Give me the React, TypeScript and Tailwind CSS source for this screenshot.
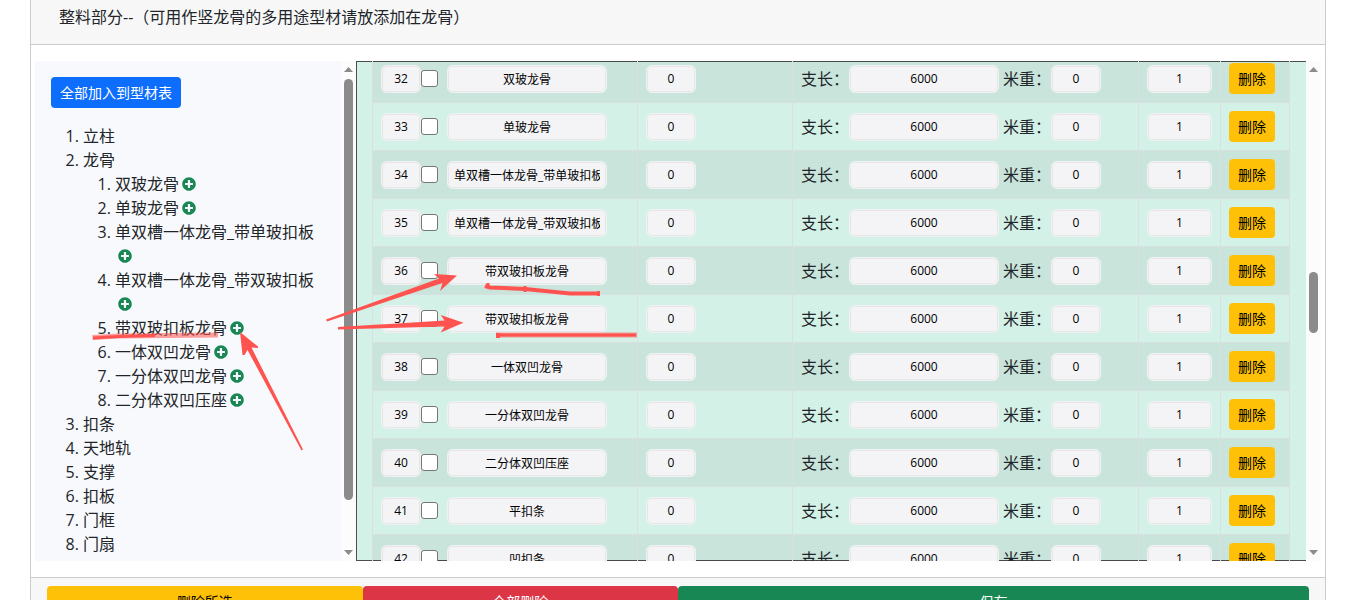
import { FaPlusCircle } from "react-icons/fa";

type Row = { no: number; name: string };

const rows: Row[] = [
  { no: 32, name: "双玻龙骨" },
  { no: 33, name: "单玻龙骨" },
  { no: 34, name: "单双槽一体龙骨_带单玻扣板" },
  { no: 35, name: "单双槽一体龙骨_带双玻扣板" },
  { no: 36, name: "带双玻扣板龙骨" },
  { no: 37, name: "带双玻扣板龙骨" },
  { no: 38, name: "一体双凹龙骨" },
  { no: 39, name: "一分体双凹龙骨" },
  { no: 40, name: "二分体双凹压座" },
  { no: 41, name: "平扣条" },
  { no: 42, name: "凹扣条" },
];

const categories: { name: string; children?: string[] }[] = [
  { name: "立柱" },
  {
    name: "龙骨",
    children: [
      "双玻龙骨",
      "单玻龙骨",
      "单双槽一体龙骨_带单玻扣板",
      "单双槽一体龙骨_带双玻扣板",
      "带双玻扣板龙骨",
      "一体双凹龙骨",
      "一分体双凹龙骨",
      "二分体双凹压座",
    ],
  },
  { name: "扣条" },
  { name: "天地轨" },
  { name: "支撑" },
  { name: "扣板" },
  { name: "门框" },
  { name: "门扇" },
];

export default function App() {
  return (
    <div className="h-screen overflow-hidden bg-white font-['Open_Sans','Noto_Sans_CJK_SC',sans-serif] text-base text-[#212529]">
      <div className="relative ml-[30px] mr-[22px] border-x border-[#ccc]">
        <header className="h-[45px] border-b border-[#ccc] bg-[#f7f7f7] px-7 pt-[5px]">
          <h1 className="leading-6">整料部分--（可用作竖龙骨的多用途型材请放添加在龙骨）</h1>
        </header>
        <main className="flex px-1 py-4">
          <CategoryPanel />
          <ProfileTable />
        </main>
        <footer className="flex border-t border-[#ccc] bg-[#f7f7f7] px-4 py-2 text-sm">
          <button className="h-[31px] flex-1 rounded bg-[#ffc107] text-black">删除所选</button>
          <button className="h-[31px] flex-1 rounded bg-[#dc3545] text-white">全部删除</button>
          <button className="h-[31px] flex-2 rounded bg-[#198754] text-white">保存</button>
        </footer>
      </div>
      <Marks />
    </div>
  );
}

function CategoryPanel() {
  return (
    <aside className="flex h-[500px] w-[321px] shrink-0 overflow-hidden bg-[#f8f9fc]">
      <div className="min-w-0 flex-1 p-4">
        <button className="block h-[31px] rounded bg-[#0d6efd] px-[9px] text-sm text-white">
          全部加入到型材表
        </button>
        <ol className="mt-4 list-decimal pl-8 leading-6">
          {categories.map((c) => (
            <li key={c.name}>
              {c.name}
              {c.children && (
                <ol className="list-decimal pl-8">
                  {c.children.map((child) => (
                    <li key={child}>
                      {child}
                      <button
                        aria-label={`添加${child}`}
                        className="ml-[3px] inline-block align-[-1px] text-sm leading-none text-[#198754]"
                      >
                        <FaPlusCircle className="block" />
                      </button>
                    </li>
                  ))}
                </ol>
              )}
            </li>
          ))}
        </ol>
      </div>
      <Scrollbar before="flex-none h-[7px]" thumb="h-[421px]" />
    </aside>
  );
}

function ProfileTable() {
  return (
    <section className="flex h-[500px] min-w-0 flex-1 overflow-hidden bg-[#d4f1e7] shadow-[inset_0_0_0_1px_#4a4f4d]">
      <div className="min-w-0 flex-1 px-4">
        <table className="-mt-[7px] w-full table-fixed border-collapse">
          <colgroup>
            <col className="w-[265px]" />
            <col className="w-[155px]" />
            <col />
            <col className="w-[82px]" />
            <col className="w-[69px]" />
          </colgroup>
          <tbody>
            {rows.map((row) => (
              <TableRow key={row.no} {...row} />
            ))}
          </tbody>
        </table>
      </div>
      <Scrollbar before="flex-none h-[200px]" thumb="h-[61px]" />
    </section>
  );
}

function TableRow({ no, name }: Row) {
  return (
    <tr className="h-12 odd:bg-black/5">
      <Cell>
        <div className="flex items-center">
          <Field label="序号" value={no} width="w-10" />
          <input
            type="checkbox"
            aria-label={`选择${no}`}
            className="mr-[9px] size-[17px] shrink-0 appearance-none rounded-[3px] border border-[#767676] bg-white"
          />
          <Field label="名称" value={name} width="w-40" />
        </div>
      </Cell>
      <Cell>
        <Field label="数量" value={0} width="w-[50px]" />
      </Cell>
      <Cell>
        <div className="flex items-center">
          <label className="flex items-center">
            <span className="w-12 shrink-0 whitespace-nowrap">支长：</span>
            <Field value={6000} width="w-[150px]" />
          </label>
          <label className="ml-1 flex items-center">
            <span className="w-12 shrink-0 whitespace-nowrap">米重：</span>
            <Field value={0} width="w-[50px]" />
          </label>
        </div>
      </Cell>
      <Cell>
        <Field label="系数" value={1} width="w-[65px]" />
      </Cell>
      <Cell>
        <button className="block h-[31px] rounded bg-[#ffc107] px-[9px] text-sm text-black">删除</button>
      </Cell>
    </tr>
  );
}

function Cell({ children }: { children: React.ReactNode }) {
  return <td className="border border-[#dadfe3] px-2 py-0">{children}</td>;
}

function Field({ label, value, width }: { label?: string; value: string | number; width: string }) {
  return (
    <input
      aria-label={label}
      defaultValue={value}
      className={`${width} block h-7 shrink-0 rounded-md border border-[#eef3f2] bg-[#f4f4f7] px-[6px] text-center text-xs text-black shadow-[inset_0_0_0_1px_#e6e6e8]`}
    />
  );
}

function Scrollbar({ before, thumb }: { before: string; thumb: string }) {
  return (
    <div className="flex w-[15px] shrink-0 flex-col items-center bg-[#fcfcfc] py-[6px]">
      <svg viewBox="0 0 9 5" className="h-[5px] w-[9px] shrink-0 fill-[#8b8b8b]">
        <path d="M0 5 4.5 0 9 5z" />
      </svg>
      <div className={before} />
      <div className={`${thumb} w-[9px] shrink-0 rounded-full bg-[#8b8b8b]`} />
      <svg viewBox="0 0 9 5" className="mt-auto h-[5px] w-[9px] shrink-0 fill-[#8b8b8b]">
        <path d="M0 0h9L4.5 5z" />
      </svg>
    </div>
  );
}

// hand-drawn red arrows and underlines
function Marks() {
  return (
    <svg
      width="1348"
      height="600"
      className="pointer-events-none absolute left-0 top-0"
      fill="#ff5350"
      aria-hidden="true"
    >
      <path d="M326 319.5 439 278.5 434 274 457 275.5 440 291 442.500 283 327 321.500z" />
      <path d="M338 327 444.500 320.500 440.700 315 463.500 322.700 440.700 332.500 444.500 326.500 338 329.500z" />
      <path d="M240 332 258 346.500 258 348 251.500 347.500 303 449.500 301.500 450.500 247.500 350 244.500 355 242.500 355z" />
      <g fill="none" stroke="#ff5350">
        <g strokeOpacity="0.55" strokeWidth="5">
          <path d="M92.500 337.500 118 336 218 335" />
          <path d="M496 335H637" />
        </g>
        <path d="M93 338 118 336.500 155 335.500" strokeWidth="3" />
        <path d="M485 286 490 287.500 525 289 570 293.500H600" strokeWidth="4" />
        <path d="M488 283V288M525 286V292M598.500 291V296" strokeWidth="3" />
        <path d="M497 335H636" strokeWidth="3" />
        <path d="M498 333V338" strokeWidth="4" />
      </g>
    </svg>
  );
}
